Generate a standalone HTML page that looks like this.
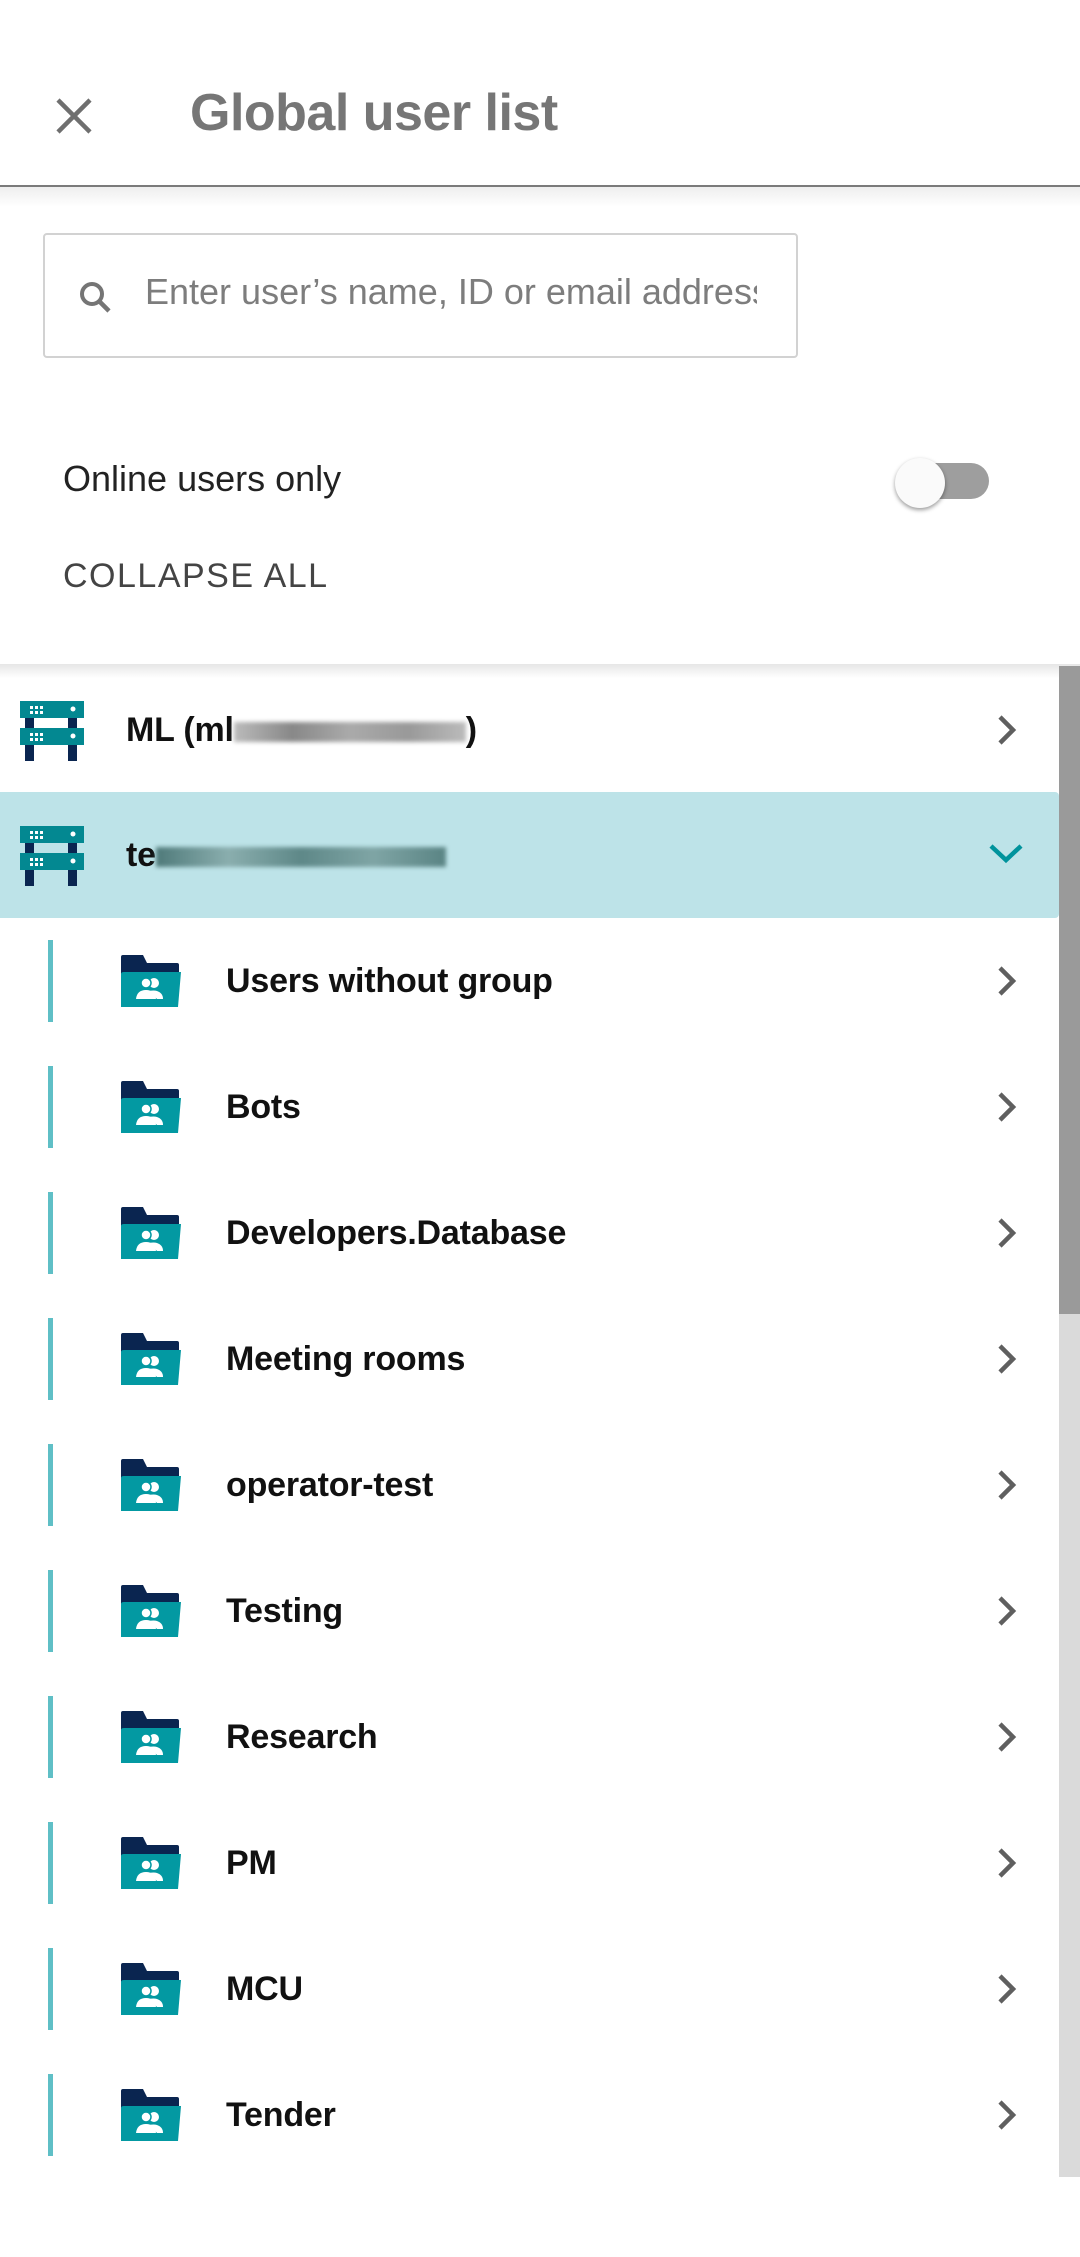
<!DOCTYPE html>
<html><head><meta charset="utf-8"><style>
*{margin:0;padding:0;box-sizing:border-box}
body{width:1080px;height:2257px;position:relative;background:#fff;font-family:"Liberation Sans",sans-serif;overflow:hidden}
.abs{position:absolute}
.row{position:absolute;left:0;width:1059px;height:126px}
.row .t{position:absolute;top:0;line-height:126px;font-size:34px;font-weight:bold;color:#111;letter-spacing:-0.2px;white-space:nowrap}
.row .g{left:226px}
.chev{position:absolute;left:994px;top:48px}
.bar{position:absolute;left:48px;top:22px;width:5px;height:82px;background:#5fbfc6}
.fold{position:absolute;left:121px;top:37px}
</style></head><body>
<svg class="abs" style="left:52px;top:94px" width="44" height="44" viewBox="0 0 44 44"><path d="M6 6L38 38M38 6L6 38" stroke="#6f6f6f" stroke-width="4.5"/></svg>
<div class="abs" style="left:190px;top:83px;font-size:52px;font-weight:bold;color:#767676;letter-spacing:-0.5px">Global user list</div>
<div class="abs" style="left:0;top:185px;width:1080px;height:2px;background:#7a7a7a"></div>
<div class="abs" style="left:0;top:187px;width:1080px;height:20px;background:linear-gradient(#eee,#fff)"></div>
<div class="abs" style="left:43px;top:233px;width:755px;height:125px;border:2px solid #d2d2d2;border-radius:4px"></div>
<svg class="abs" style="left:76px;top:278px" width="40" height="40" viewBox="0 0 40 40"><circle cx="16" cy="16" r="10" fill="none" stroke="#757575" stroke-width="4"/><path d="M23 23L33 33" stroke="#757575" stroke-width="4.5"/></svg>
<div class="abs" style="left:145px;top:271px;font-size:36px;color:#7d7d7d;white-space:nowrap;width:612px;overflow:hidden">Enter user’s name, ID or email address</div>
<div class="abs" style="left:63px;top:458px;font-size:36px;color:#222">Online users only</div>
<div class="abs" style="left:905px;top:463px;width:84px;height:36px;border-radius:18px;background:#9e9e9e"></div>
<div class="abs" style="left:895px;top:458px;width:50px;height:50px;border-radius:50%;background:#fafafa;box-shadow:0 2px 4px rgba(0,0,0,.4)"></div>
<div class="abs" style="left:63px;top:557px;font-size:34px;color:#444;letter-spacing:1.5px">COLLAPSE ALL</div>
<div class="abs" style="left:0;top:664px;width:1080px;height:14px;background:linear-gradient(#e6e6e6,#fff)"></div>
<div class="abs" style="left:1059px;top:666px;width:21px;height:1511px;background:#dadada"></div>
<div class="abs" style="left:1059px;top:666px;width:21px;height:648px;background:#9a9a9a"></div>
<svg width="0" height="0" style="position:absolute"><defs>
<g id="srv"><rect x="5" y="14" width="9" height="46" fill="#0a2550"/><rect x="48" y="14" width="9" height="46" fill="#0a2550"/><rect x="0" y="0" width="64" height="17" fill="#038891"/><rect x="0" y="27" width="64" height="17" fill="#038891"/><g fill="#fff"><rect x="10" y="5" width="3" height="3"/><rect x="15" y="5" width="3" height="3"/><rect x="20" y="5" width="3" height="3"/><rect x="10" y="10" width="3" height="3"/><rect x="15" y="10" width="3" height="3"/><rect x="20" y="10" width="3" height="3"/><rect x="10" y="32" width="3" height="3"/><rect x="15" y="32" width="3" height="3"/><rect x="20" y="32" width="3" height="3"/><rect x="10" y="37" width="3" height="3"/><rect x="15" y="37" width="3" height="3"/><rect x="20" y="37" width="3" height="3"/><circle cx="53" cy="8" r="2.5"/><circle cx="53" cy="35" r="2.5"/></g></g>
<g id="fld"><path d="M0 2Q0 0 2 0H22L26 8H56Q58 8 58 10V20H0Z" fill="#0a2550"/><path d="M3 17H60L57 52H0V19Q0 17 3 17Z" fill="#0399a2"/><g fill="#fff"><circle cx="25" cy="28" r="5"/><circle cx="33" cy="28" r="5"/><path d="M15 44Q16 35 25 35Q34 35 35 44Z"/><path d="M28 36Q33 35 36 36Q42 38 42 44H36Z"/></g><circle cx="25" cy="28" r="5" fill="none" stroke="#0399a2" stroke-width="1.5"/></g>
<path id="chv" d="M6 2L19 15L6 28" fill="none" stroke="#5f5f5f" stroke-width="4.5"/>
</defs></svg>

<div class="row" style="top:667px">
<svg class="abs" style="left:20px;top:34px" width="64" height="60"><use href="#srv"/></svg>
<div class="t" style="left:126px">ML (ml<span style="display:inline-block;width:232px;height:20px;background:linear-gradient(90deg,#bbb,#888,#aaa,#999,#bbb);vertical-align:middle;filter:blur(2px)"></span>)</div>
<svg class="chev" width="28" height="30"><use href="#chv"/></svg>
</div>
<div class="row" style="top:792px;background:#bde3e8;border-radius:0 4px 4px 0">
<svg class="abs" style="left:20px;top:34px" width="64" height="60"><use href="#srv"/></svg>
<div class="t" style="left:126px">te<span style="display:inline-block;width:290px;height:20px;background:linear-gradient(90deg,#4f7a7a,#8aaeae,#5e8888,#7fa5a5,#5a8484);vertical-align:middle;filter:blur(2px)"></span></div>
<svg class="abs" style="left:988px;top:50px" width="36" height="24"><path d="M3 4L18 18L33 4" fill="none" stroke="#00939c" stroke-width="4.5"/></svg>
</div>

<div class="row" style="top:918px"><div class="bar"></div><svg class="fold" width="62" height="54"><use href="#fld"/></svg><div class="t g">Users without group</div><svg class="chev" width="28" height="30"><use href="#chv"/></svg></div>
<div class="row" style="top:1044px"><div class="bar"></div><svg class="fold" width="62" height="54"><use href="#fld"/></svg><div class="t g">Bots</div><svg class="chev" width="28" height="30"><use href="#chv"/></svg></div>
<div class="row" style="top:1170px"><div class="bar"></div><svg class="fold" width="62" height="54"><use href="#fld"/></svg><div class="t g">Developers.Database</div><svg class="chev" width="28" height="30"><use href="#chv"/></svg></div>
<div class="row" style="top:1296px"><div class="bar"></div><svg class="fold" width="62" height="54"><use href="#fld"/></svg><div class="t g">Meeting rooms</div><svg class="chev" width="28" height="30"><use href="#chv"/></svg></div>
<div class="row" style="top:1422px"><div class="bar"></div><svg class="fold" width="62" height="54"><use href="#fld"/></svg><div class="t g">operator-test</div><svg class="chev" width="28" height="30"><use href="#chv"/></svg></div>
<div class="row" style="top:1548px"><div class="bar"></div><svg class="fold" width="62" height="54"><use href="#fld"/></svg><div class="t g">Testing</div><svg class="chev" width="28" height="30"><use href="#chv"/></svg></div>
<div class="row" style="top:1674px"><div class="bar"></div><svg class="fold" width="62" height="54"><use href="#fld"/></svg><div class="t g">Research</div><svg class="chev" width="28" height="30"><use href="#chv"/></svg></div>
<div class="row" style="top:1800px"><div class="bar"></div><svg class="fold" width="62" height="54"><use href="#fld"/></svg><div class="t g">PM</div><svg class="chev" width="28" height="30"><use href="#chv"/></svg></div>
<div class="row" style="top:1926px"><div class="bar"></div><svg class="fold" width="62" height="54"><use href="#fld"/></svg><div class="t g">MCU</div><svg class="chev" width="28" height="30"><use href="#chv"/></svg></div>
<div class="row" style="top:2052px"><div class="bar"></div><svg class="fold" width="62" height="54"><use href="#fld"/></svg><div class="t g">Tender</div><svg class="chev" width="28" height="30"><use href="#chv"/></svg></div>
</body></html>
